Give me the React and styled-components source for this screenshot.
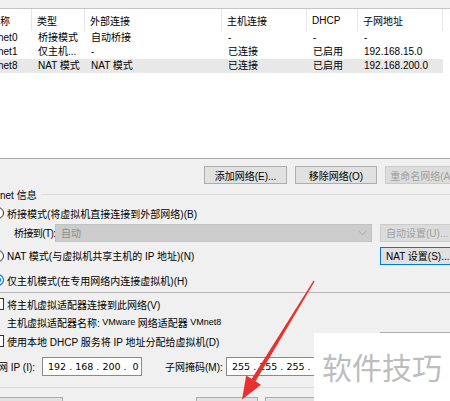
import React from 'react'
import styled, { createGlobalStyle } from 'styled-components'

const GlobalStyle = createGlobalStyle`
  html, body {
    margin: 0;
    padding: 0;
    background: #f0f0f0;
  }
  body {
    font-family: "Liberation Sans", "Noto Sans CJK SC", sans-serif;
    font-size: 10px;
    color: #000;
  }
`

const columns = ['名称', '类型', '外部连接', '主机连接', 'DHCP', '子网地址']

const networks = [
  ['VMnet0', '桥接模式', '自动桥接', '-', '-', '-'],
  ['VMnet1', '仅主机...', '-', '已连接', '已启用', '192.168.15.0'],
  ['VMnet8', 'NAT 模式', 'NAT 模式', '已连接', '已启用', '192.168.200.0'],
]

function App() {
  return (
    <Page>
      <GlobalStyle />
      <TopStrip />
      <ListBox>
        <ListGrid>
          {columns.map((c, i) => (
            <HeadCell key={c} $first={i === 0}>{c}</HeadCell>
          ))}
          {networks.map((row, r) =>
            row.map((v, i) => (
              <Cell key={r + '-' + i} $first={i === 0} $sel={r === 2}>{v}</Cell>
            ))
          )}
        </ListGrid>
      </ListBox>

      <ButtonBar>
        <Button $w={83}>添加网络(E)...</Button>
        <Button $w={82}>移除网络(O)</Button>
        <Button $w={82} $disabled>重命名网络(A)...</Button>
      </ButtonBar>

      <LegendRow>
        <Legend>VMnet 信息</Legend>
        <LegendLine />
      </LegendRow>

      <OptionRow $h={18} $mt={4}>
        <Radio />
        桥接模式(将虚拟机直接连接到外部网络)(B)
      </OptionRow>

      <OptionRow $h={19} $mt={1} $pl={14}>
        <FieldLabel $w={41} $ml={0} $tight>桥接到(T):</FieldLabel>
        <Select>
          自动
          <svg width="9" height="6" viewBox="0 0 9 6">
            <path d="M0.5 0.8 L4.5 4.8 L8.5 0.8" fill="none" stroke="#a8a8a8" strokeWidth="1" />
          </svg>
        </Select>
        <SideButton $disabled>自动设置(U)...</SideButton>
      </OptionRow>

      <OptionRow $h={19} $mt={4}>
        <Radio />
        NAT 模式(与虚拟机共享主机的 IP 地址)(N)
        <SideButton $focus>NAT 设置(S)...</SideButton>
      </OptionRow>

      <OptionRow $h={18} $mt={6}>
        <Radio $checked />
        仅主机模式(在专用网络内连接虚拟机)(H)
      </OptionRow>

      <Divider $mt={3} $color="#b9b9b9" />

      <OptionRow $h={18} $mt={2}>
        <Check />
        将主机虚拟适配器连接到此网络(V)
      </OptionRow>

      <OptionRow $h={18} $pl={7}>
        主机虚拟适配器名称: <Small>&nbsp;VMware&nbsp;</Small>网络适配器<Small>&nbsp;VMnet8</Small>
      </OptionRow>

      <OptionRow $h={18} $mt={1}>
        <Check />
        使用本地 DHCP 服务将 IP 地址分配给虚拟机(D)
        <SideButton>DHCP 设置(P)...</SideButton>
      </OptionRow>

      <OptionRow $h={19} $mt={7}>
        <FieldLabel $w={54} $ml={-12}>子网 IP (I):</FieldLabel>
        <IpBox>192 . 168 . 200 .  0</IpBox>
        <FieldLabel $w={61} $ml={23}>子网掩码(M):</FieldLabel>
        <IpBox>255 . 255 . 255 .  0</IpBox>
      </OptionRow>

      <Divider $mt={11} $color="#d9d9d9" />

      <BottomBar>
        <Button $w={75} $ml={-12} $h={20}>还原默认设置(R)</Button>
        <Button $w={62} $ml={133} $h={20}>确定</Button>
        <Button $w={62} $ml={7} $h={20}>取消</Button>
        <Button $w={62} $ml={7} $h={20}>应用(A)</Button>
        <Button $w={62} $ml={7} $h={20}>帮助</Button>
      </BottomBar>

      <Arrow viewBox="0 0 450 401" width="450" height="401">
        <polygon
          points="313.6,280.6 314.6,281.4 255.4,381.4 251.6,379"
          fill="#e8302c"
        />
        <polygon points="242,399.5 246.2,375.6 261,384.8" fill="#e8302c" />
      </Arrow>

      <Watermark>软件技巧</Watermark>
    </Page>
  )
}

export default App

const Page = styled.div`
  position: relative;
  width: 450px;
  height: 401px;
  overflow: hidden;
  display: flex;
  flex-direction: column;
  background: #f0f0f0;
`

const TopStrip = styled.div`
  height: 8px;
  flex-shrink: 0;
`

const ListBox = styled.div`
  height: 151px;
  flex-shrink: 0;
  box-sizing: border-box;
  background: #fff;
  border-top: 1px solid #c4c4c4;
  border-bottom: 1px solid #a9a9a9;
  overflow: hidden;
`

const ListGrid = styled.div`
  margin-left: -13px;
  display: grid;
  grid-template-columns: 45px 53px 137px 85px 51px 85px;
  width: 456px;
`

const HeadCell = styled.div`
  height: 22px;
  display: flex;
  align-items: center;
  box-sizing: border-box;
  padding-left: ${(p) => (p.$first ? '3px' : '5px')};
  border-right: 1px solid #e5e5e5;
  white-space: nowrap;
  overflow: hidden;
`

const Cell = styled.div`
  height: 14px;
  line-height: 14px;
  box-sizing: border-box;
  padding-left: 6px;
  text-indent: ${(p) => (p.$first ? '-10px' : '0')};
  background: ${(p) => (p.$sel ? '#e8e8e8' : 'transparent')};
  white-space: nowrap;
  overflow: hidden;
`

const ButtonBar = styled.div`
  display: flex;
  gap: 8px;
  padding-left: 204px;
  margin-top: 7px;
  flex-shrink: 0;
`

const Button = styled.div`
  width: ${(p) => p.$w}px;
  height: ${(p) => p.$h || 18}px;
  margin-left: ${(p) => p.$ml || 0}px;
  flex-shrink: 0;
  box-sizing: border-box;
  display: flex;
  align-items: center;
  justify-content: center;
  white-space: nowrap;
  overflow: hidden;
  background: ${(p) => (p.$disabled ? '#dcdcdc' : '#e1e1e1')};
  border: 1px solid ${(p) => (p.$disabled ? '#cbcbcb' : p.$focus ? '#0078d7' : '#adadad')};
  color: ${(p) => (p.$disabled ? '#a0a0a0' : '#000')};
`

const SideButton = styled(Button).attrs({ $w: 78 })`
  margin-left: auto;
  margin-right: -8px;
  justify-content: flex-start;
  padding-left: 5px;
`

const LegendRow = styled.div`
  display: flex;
  align-items: center;
  height: 12px;
  margin-top: 4px;
  flex-shrink: 0;
`

const Legend = styled.span`
  margin-left: -15px;
  white-space: nowrap;
`

const LegendLine = styled.div`
  flex: 1;
  height: 1px;
  margin-left: 4px;
  background: #dcdcdc;
`

const OptionRow = styled.div`
  display: flex;
  align-items: center;
  height: ${(p) => p.$h}px;
  margin-top: ${(p) => p.$mt || 0}px;
  padding-left: ${(p) => p.$pl || 0}px;
  flex-shrink: 0;
  white-space: nowrap;
`

const Radio = styled.span`
  width: 12px;
  height: 12px;
  margin-left: -8px;
  margin-right: 3px;
  flex-shrink: 0;
  box-sizing: border-box;
  border-radius: 50%;
  border: 1px solid ${(p) => (p.$checked ? '#0078d7' : '#333')};
  background: ${(p) => (p.$checked ? '#0078d7' : '#fff')};
  box-shadow: ${(p) => (p.$checked ? 'inset 0 0 0 2px #fff' : 'none')};
`

const Check = styled.span`
  width: 12px;
  height: 12px;
  margin-left: -8px;
  margin-right: 3px;
  flex-shrink: 0;
  box-sizing: border-box;
  border: 1px solid #333;
  background: #fff;
`

const Small = styled.span`
  font-size: 9px;
`

const FieldLabel = styled.span`
  width: ${(p) => p.$w}px;
  margin-left: ${(p) => p.$ml}px;
  flex-shrink: 0;
  white-space: nowrap;
  letter-spacing: ${(p) => (p.$tight ? '-0.6px' : 'normal')};
`

const Select = styled.div`
  width: 317px;
  height: 18px;
  flex-shrink: 0;
  box-sizing: border-box;
  display: flex;
  align-items: center;
  justify-content: space-between;
  padding: 0 4px 0 5px;
  background: #cccccc;
  border: 1px solid #c2c2c2;
  color: #8e8e8e;
`

const IpBox = styled.div`
  width: 100px;
  height: 19px;
  flex-shrink: 0;
  box-sizing: border-box;
  display: flex;
  align-items: center;
  padding-left: 5px;
  background: #fff;
  border: 1px solid #8a8a8a;
  white-space: pre;
  font-family: "DejaVu Sans", sans-serif;
  font-size: 9.5px;
`

const Divider = styled.div`
  height: 1px;
  flex-shrink: 0;
  margin-top: ${(p) => p.$mt}px;
  background: ${(p) => p.$color};
`

const BottomBar = styled.div`
  display: flex;
  margin-top: 9px;
  flex-shrink: 0;
`

const Arrow = styled.svg`
  position: absolute;
  left: 0;
  top: 0;
  pointer-events: none;
`

const Watermark = styled.div`
  position: absolute;
  left: 314px;
  top: 333px;
  right: 0;
  bottom: 0;
  background: #fff;
  box-sizing: border-box;
  padding: 15px 0 0 8px;
  font-family: "Noto Sans CJK SC", sans-serif;
  font-size: 30px;
  line-height: 36px;
  color: #bdbdbd;
  white-space: nowrap;
`
